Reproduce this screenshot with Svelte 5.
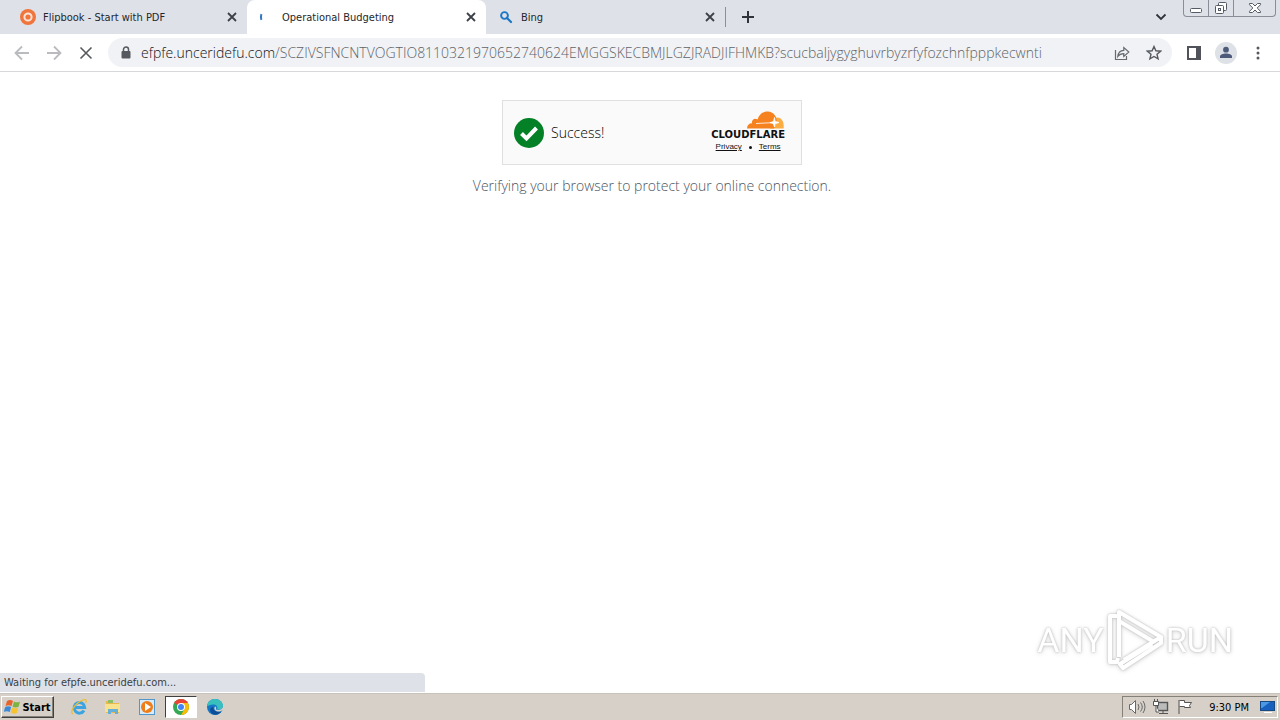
<script>
  const tabs = [
    { title: 'Flipbook - Start with PDF', icon: 'ring', active: false },
    { title: 'Operational Budgeting', icon: 'loading', active: true },
    { title: 'Bing', icon: 'search', active: false }
  ];
  const host = 'efpfe.unceridefu.com';
  const path =
    '/SCZIVSFNCNTVOGTIO8110321970652740624EMGGSKECBMJLGZJRADJIFHMKB?scucbaljygyghuvrbyzrfyfozchnfpppkecwnti';
</script>

<div class="screen">
  <header>
    <div class="strip">
      {#each tabs as tab}
        <div class="tab" class:active={tab.active}>
          <svg class="fav" width="16" height="16" viewBox="0 0 16 16" aria-hidden="true">
            {#if tab.icon === 'ring'}
              <circle cx="8" cy="8" r="8" fill="#f0753c" />
              <circle cx="8" cy="8" r="3.6" fill="none" stroke="#fbe3da" stroke-width="2" />
            {:else if tab.icon === 'loading'}
              <path d="M2.4 5.2Q1.4 8 2.4 10.8" fill="none" stroke="#2f78c4" stroke-width="2" />
            {:else}
              <circle cx="6.5" cy="6.5" r="3.4" fill="none" stroke="#1b76c5" stroke-width="1.9" />
              <path d="M9 9l4 4" stroke="#1b76c5" stroke-width="2.2" stroke-linecap="round" />
            {/if}
          </svg>
          <span class="title">{tab.title}</span>
          <button class="close" aria-label="Close tab">
            <svg width="10" height="10" viewBox="0 0 10 10"><path d="M1 1l8 8M9 1l-8 8" stroke="#3c4047" stroke-width="1.8" /></svg>
          </button>
        </div>
      {/each}
      <button class="new" aria-label="New tab">
        <svg width="12" height="12" viewBox="0 0 12 12"><path d="M6 0v12M0 6h12" stroke="#30343a" stroke-width="2" /></svg>
      </button>
      <button class="search-tabs" aria-label="Search tabs">
        <svg width="12" height="8" viewBox="0 0 12 8"><path d="M1.5 1.5L6 6l4.5-4.500" fill="none" stroke="#30343a" stroke-width="1.8" /></svg>
      </button>
      <div class="window">
        <button aria-label="Minimize">
          <svg width="14" height="14" viewBox="0 0 14 14"><rect x="1.5" y="7.5" width="11" height="4" rx="1" fill="#fff" stroke="#555b66" /></svg>
        </button>
        <button aria-label="Restore">
          <svg width="14" height="14" viewBox="0 0 14 14" fill="#fff" stroke="#555b66"><rect x="4.5" y="1.5" width="8" height="8" rx="1" /><rect x="1.5" y="4.5" width="8" height="8" rx="1" /><rect x="4.5" y="7.5" width="2" height="2" /></svg>
        </button>
        <button class="wide" aria-label="Close">
          <svg width="14" height="14" viewBox="0 0 14 14"><path d="M1.5 2.5h3L7 5l2.500-2.500h3v1.200L9.200 7l3.300 3.300v1.200h-3L7 9l-2.500 2.500h-3v-1.200L4.800 7 1.500 3.700z" fill="#fff" stroke="#555b66" /></svg>
        </button>
      </div>
    </div>

    <div class="toolbar">
      <div class="nav">
        <button aria-label="Back" disabled>
          <svg width="16" height="16" viewBox="0 0 16 16"><path d="M15 8H2M8 1.500L1.500 8 8 14.500" fill="none" stroke="#b9bbbe" stroke-width="1.8" /></svg>
        </button>
        <button aria-label="Forward" disabled>
          <svg width="16" height="16" viewBox="0 0 16 16"><path d="M1 8h13M8 1.500L14.500 8 8 14.500" fill="none" stroke="#b9bbbe" stroke-width="1.8" /></svg>
        </button>
        <button aria-label="Stop loading">
          <svg width="16" height="16" viewBox="0 0 16 16"><path d="M2.500 2.500l11 11M13.500 2.500l-11 11" stroke="#55585c" stroke-width="1.6" /></svg>
        </button>
      </div>
      <div class="omnibox">
        <svg class="lock" width="10" height="14" viewBox="0 0 10 14" aria-hidden="true"><path d="M2.500 6V3.500a2.500 2.500 0 0 1 5 0V6" fill="none" stroke="#55595f" stroke-width="1.5" /><rect x="0.5" y="5" width="9" height="7.5" rx="1" fill="#55595f" /></svg>
        <div class="url"><span>{host}</span>{path}</div>
        <button aria-label="Share this page">
          <svg width="16" height="16" viewBox="0 0 16 16" fill="none" stroke="#666a70" stroke-width="1.2"><path d="M1.500 5v9.500h11V11" /><path d="M3.800 11.500C4.200 7.500 6.500 5.600 9.800 5.400V2.500l5 4.500-5 4.400V8.600C7 8.600 5.200 9.500 3.800 11.500z" /></svg>
        </button>
        <button aria-label="Bookmark this tab">
          <svg width="16" height="16" viewBox="0 0 16 16"><path d="M8 1.500l1.900 4.300 4.700.4-3.600 3.100 1.100 4.600L8 11.500l-4.100 2.400L5 9.300 1.400 6.200l4.700-.4z" fill="none" stroke="#55595f" stroke-width="1.4" /></svg>
        </button>
      </div>
      <div class="actions">
        <button aria-label="Side panel">
          <svg width="14" height="14" viewBox="0 0 14 14"><rect x="1" y="1" width="12" height="12" fill="none" stroke="#505359" stroke-width="2" /><rect x="9" y="1" width="4" height="12" fill="#505359" /></svg>
        </button>
        <button aria-label="Profile">
          <svg width="22" height="22" viewBox="0 0 22 22"><circle cx="11" cy="11" r="11" fill="#dee1e6" /><circle cx="11" cy="7.7" r="2.9" fill="#4e5a7a" /><path d="M5 16v-1.500c0-4 12-4 12 0V16z" fill="#4e5a7a" /></svg>
        </button>
        <button aria-label="Menu">
          <svg width="16" height="16" viewBox="0 0 16 16" fill="#55595f"><circle cx="8" cy="3" r="1.5" /><circle cx="8" cy="8" r="1.5" /><circle cx="8" cy="13" r="1.5" /></svg>
        </button>
      </div>
    </div>
  </header>

  <main>
    <section class="widget">
      <svg width="30" height="30" viewBox="0 0 30 30" aria-hidden="true"><circle cx="15" cy="15" r="15" fill="#048127" /><path d="M7.500 15.500l5 5L22.500 10" fill="none" stroke="#fff" stroke-width="4" /></svg>
      <span class="success">Success!</span>
      <div class="brand">
        <svg class="cloud" width="38" height="18" viewBox="0 0 38 18" aria-hidden="true">
          <path d="M27 7.500c6-3 10.500 2 9.600 9.900H23z" fill="#fbad41" />
          <path d="M0 17.400c.1-3.200 2-5.200 5-5.200-.8-3.500 3-5.800 5.500-3.700C12.300 2.900 16.300.2 21 .5c5.300.3 8.500 4.300 8.700 9.500L27 17.400z" fill="#f6821f" />
          <path d="M9 12.500l17.600-.9M27.500 6.500l.7 4 3.800 1-3.800 1.200-.7 3.300-1.300-3.500-3.200-.9 3.500-1z" stroke="#fff" stroke-width=".8" fill="#fff" />
        </svg>
        <b>CLOUDFLARE</b>
        <div class="links"><a href="#privacy">Privacy</a><i></i><a href="#terms">Terms</a></div>
      </div>
    </section>
    <p>Verifying your browser to protect your online connection.</p>

    <div class="watermark">
      <span>ANY</span>
      <svg width="58" height="64" viewBox="0 0 58 64" fill="none" stroke="#fff" stroke-linejoin="round" aria-hidden="true">
        <path d="M11 8H4v46h7l1-4" stroke-width="4" />
        <path d="M13 49V4l42 25-37 23M13 13l35 21M55 29v6L17 60l-3-4 32-20" stroke-width="4" />
      </svg>
      <span>RUN</span>
    </div>
    <div class="status">Waiting for efpfe.unceridefu.com...</div>
  </main>

  <footer>
    <button class="start">
      <svg width="17" height="16" viewBox="0 0 17 16" aria-hidden="true"><path d="M3 2q3-2 6 0L7.500 7q-3-1.500-6 0z" fill="#e8642c" /><path d="M10 2.500q3 1.700 6 0L14.500 7.700q-3 1.500-6 0z" fill="#7cb342" /><path d="M1.200 8q3-1.500 6 0L5.700 13q-3-1.700-6 0z" fill="#3b8ad8" /><path d="M8.200 8.500q3 1.700 6 0L12.700 14q-3 1.500-6-.5z" fill="#f7c32e" /></svg>
      Start
    </button>
    <nav>
      <button aria-label="Internet Explorer">
        <svg width="18" height="18" viewBox="0 0 18 18" fill="none"><path d="M14 12.500A5.300 5.300 0 1 1 14.700 9.500H5" stroke="#3ba3df" stroke-width="3" /><path d="M3 15.800C-1 15 5 5 13 2c3.500-1.200 4 .5 2.500 3" stroke="#edbd31" stroke-width="1.3" /></svg>
      </button>
      <button aria-label="File Explorer">
        <svg width="18" height="18" viewBox="0 0 18 18"><path d="M2 3h5l1 2h7v10H2z" fill="#e9b94b" /><path d="M4 2h5v3H4z" fill="#8cbf68" /><path d="M1 6h15v8H1z" fill="#f9e28d" /><path d="M4 16v-5h10v5h-3v-2H7v2z" fill="#68afd8" /></svg>
      </button>
      <button aria-label="Media Player">
        <svg width="18" height="18" viewBox="0 0 18 18"><rect x="1.5" y="1.5" width="15" height="15" fill="#d7ecf8" stroke="#5297c9" /><circle cx="9" cy="9" r="6" fill="#ef7d19" /><path d="M7 5l6 4-6 4z" fill="#fff" /></svg>
      </button>
      <button class="pressed" aria-label="Google Chrome">
        <svg width="18" height="18" viewBox="0 0 18 18"><circle cx="9" cy="9" r="8" fill="#34a853" /><path d="M9 9L2.100 5A8 8 0 0 1 15.900 5z" fill="#ea4335" /><path d="M9 5h6.900A8 8 0 0 1 9 17l3.500-6z" fill="#fbbc05" /><circle cx="9" cy="9" r="4" fill="#fff" /><circle cx="9" cy="9" r="3" fill="#4285f4" /></svg>
      </button>
      <button aria-label="Microsoft Edge">
        <svg width="18" height="18" viewBox="0 0 18 18"><circle cx="9" cy="9" r="8" fill="#1476c6" /><path d="M1.200 8C2 2.500 6 1 9 1c5 0 8 3.500 8 7 0 3-3 4-6 3.500 1.500-3-1-5-4-5-3 0-5 2-5.800 1.500z" fill="#37c0bd" /><path d="M7.500 9c-1 3 2 5.500 8 4.500-3 4-9 4.500-11 0C3.500 11 5 9 7.500 9z" fill="#0d4d96" /><path d="M9 8.500c2 .5 1 2 1 3 2 1 6 .5 7-2.500v3l-3 1.500c-4 .5-7-2-5-5z" fill="#d4d0c8" /></svg>
      </button>
    </nav>
    <div class="tray">
      <svg width="18" height="16" viewBox="0 0 18 16" fill="none" stroke="#686868"><path d="M1.500 5.500h2l4-4v13l-4-4h-2z" fill="#fff" /><path d="M10 5q2 3 0 6M12.500 3.500q3.500 4.500 0 9M15 2q4 6 0 12" /></svg>
      <svg width="18" height="16" viewBox="0 0 18 16" fill="#fff" stroke="#555"><rect x="5.5" y="3.5" width="10" height="8" fill="#bbb" stroke-width="1.4" /><path d="M7 14.500h9M11 12v2M1.500 2.500h5v4h-5zM2.500 0v2M5.500 0v2M4 7v6h3" /></svg>
      <svg width="18" height="16" viewBox="0 0 18 16" fill="#fff" stroke="#555"><path d="M3.500 1.500h5v2h7l-2 3 1 2h-6v-1h-5M3 1v14" /></svg>
      <time>9:30 PM</time>
      <svg width="17" height="16" viewBox="0 0 17 16"><rect x="1.5" y="2.5" width="14" height="9" fill="#1860be" stroke="#174a82" /><path d="M2 3h9l-8 6H2z" fill="#4b99e4" /><path d="M5 13h8v1H5z" fill="#fff" /></svg>
    </div>
  </footer>
</div>

<style>
  :global(body) { margin: 0; }
  * { box-sizing: border-box; }
  .screen {
    display: flex;
    flex-direction: column;
    min-height: 100vh;
    background: #fff;
    font-family: 'DejaVu Sans Condensed', 'DejaVu Sans', sans-serif;
    font-size: 11px;
    color: #24272c;
  }
  button {
    display: flex;
    align-items: center;
    justify-content: center;
    flex: none;
    padding: 0;
    border: 0;
    background: none;
    font: inherit;
    color: inherit;
  }
  svg { display: block; flex: none; }
  .strip { display: flex; height: 34px; background: #dee1e8; padding-left: 8px; }
  .tab {
    display: flex;
    align-items: center;
    flex: 0 1 239px;
    min-width: 0;
    padding: 0 7px 0 12px;
  }
  .tab.active { background: #fff; border-radius: 8px 8px 0 0; }
  .title { flex: 1; min-width: 0; margin-left: 7px; overflow: hidden; white-space: nowrap; }
  .close { width: 16px; height: 16px; }
  .new { width: 44px; border-left: 1px solid #8b8f96; height: 20px; margin: 7px 0; }
  .search-tabs { width: 44px; margin-left: auto; }
  .window {
    display: flex;
    height: 17px;
    margin-right: 4px;
    border: 1px solid #888d98;
    border-top: 0;
    border-radius: 0 0 4px 4px;
  }
  .window button { width: 25px; border-right: 1px solid #888d98; }
  .window .wide { width: 41px; border: 0; }
  .toolbar {
    display: flex;
    align-items: center;
    height: 38px;
    padding: 0 6px;
    border-bottom: 1px solid #d6d8db;
  }
  .nav { display: flex; }
  .nav button { width: 32px; height: 32px; }
  .omnibox {
    display: flex;
    align-items: center;
    flex: 1;
    min-width: 0;
    height: 29px;
    margin-left: 6px;
    padding: 0 2px 0 13px;
    border-radius: 15px;
    background: #f0f2f5;
  }
  .omnibox button { width: 32px; height: 28px; }
  .url {
    flex: 1;
    min-width: 0;
    margin-left: 10px;
    overflow: hidden;
    white-space: nowrap;
    font-family: 'Open Sans', 'Noto Sans', sans-serif;
    font-weight: 300;
    font-size: 14px;
    color: #5f6368;
  }
  .url span { color: #101114; }
  .actions { display: flex; align-items: center; margin-left: 6px; }
  .actions button { width: 32px; height: 32px; }
  main {
    position: relative;
    flex: 1;
    display: flex;
    flex-direction: column;
    align-items: center;
    padding: 28px 0 0 24px;
  }
  .widget {
    display: flex;
    align-items: center;
    width: 300px;
    height: 65px;
    padding: 0 16px 0 11px;
    border: 1px solid #e0e0e0;
    background: #fafafa;
  }
  .success { flex: 1; margin-left: 7px; font: 300 14px 'Open Sans', sans-serif; color: #000; }
  .brand { display: flex; flex-direction: column; align-items: flex-end; color: #111; }
  .brand b { font: bold 10px/11px 'DejaVu Sans', sans-serif; }
  .links { display: flex; align-items: center; align-self: center; gap: 7px; font: 8px/14px 'Liberation Sans', sans-serif; }
  .links a { color: #111; }
  .links i { width: 3px; height: 3px; border-radius: 50%; background: #111; }
  p { margin: 11px 0 0; font: 300 14px/20px 'Open Sans', sans-serif; color: #4b5563; }
  .watermark {
    position: absolute;
    right: 47px;
    bottom: 21px;
    display: flex;
    align-items: center;
    gap: 2px;
    font: 34px/64px Roboto, sans-serif;
    color: #fff;
    filter: drop-shadow(0 0 1px #bbb) drop-shadow(0 1px 2px #ddd);
  }
  .status {
    position: absolute;
    left: 0;
    bottom: 1px;
    width: 425px;
    max-width: 100%;
    height: 19px;
    padding-left: 4px;
    border-radius: 0 4px 0 0;
    background: #dee1e8;
    line-height: 20px;
    color: #3c4043;
  }
  footer {
    display: flex;
    align-items: center;
    height: 27px;
    padding: 0 2px 0 1px;
    border-top: 1px solid #c7c3bb;
    background: #d6d0c8;
  }
  .start {
    gap: 1px;
    width: 53px;
    height: 22px;
    border: 1px solid;
    border-color: #fff #404040 #404040 #fff;
    box-shadow: inset -1px -1px #858078;
    font-weight: bold;
    color: #000;
  }
  nav { display: flex; gap: 2px; margin-left: 9px; }
  nav button { width: 32px; height: 22px; }
  .pressed { border: 1px solid; border-color: #404040 #fff #fff #404040; background: #fff; }
  .tray {
    display: flex;
    align-items: center;
    gap: 6px;
    height: 22px;
    margin-left: auto;
    padding: 0 1px 0 5px;
    border: 1px solid;
    border-color: #858078 #fff #fff #858078;
    color: #000;
  }
  time { margin: 0 4px 0 9px; }
</style>
